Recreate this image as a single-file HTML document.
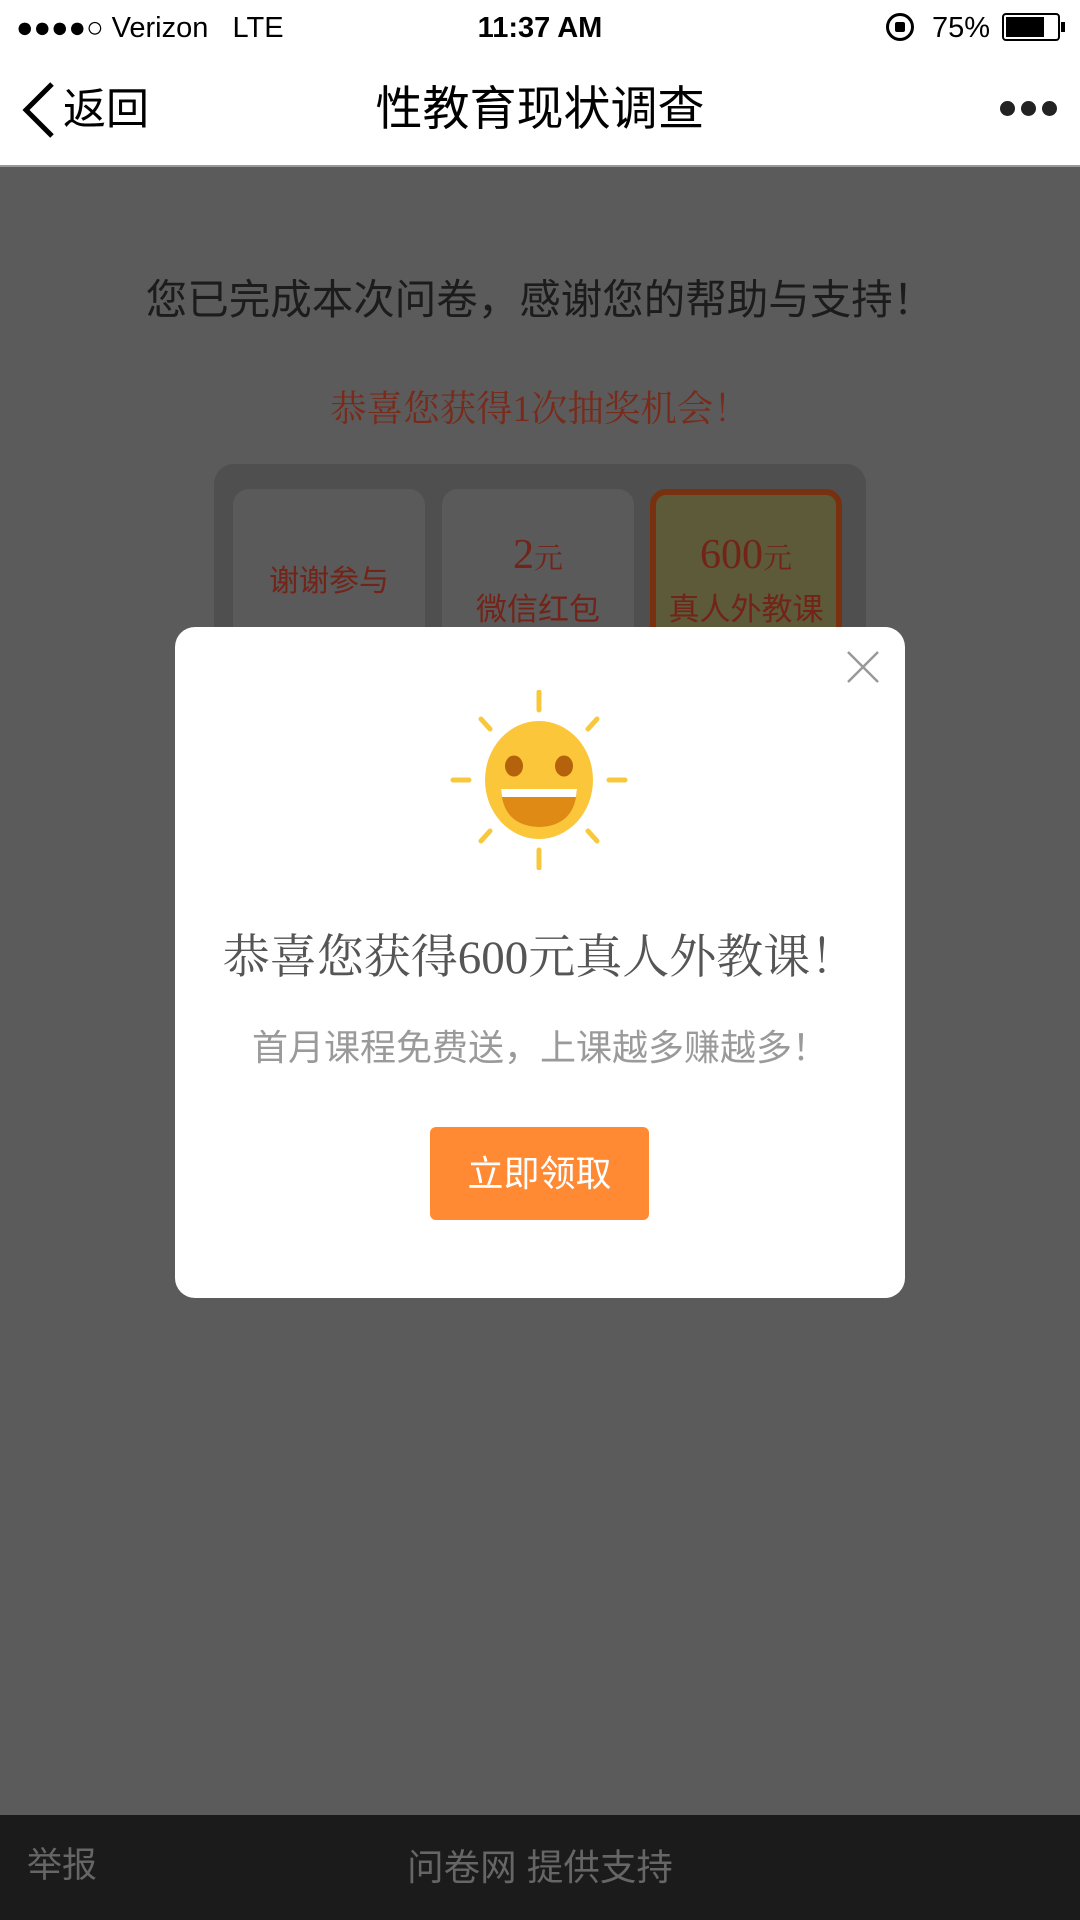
<!DOCTYPE html>
<html><head><meta charset="utf-8"><style>
*{margin:0;padding:0;box-sizing:border-box}
body{width:1080px;height:1920px;position:relative;overflow:hidden;background:#5b5b5b;font-family:"Liberation Sans","Noto Sans CJK SC",sans-serif}
.a{position:absolute}
.serif{font-family:"Liberation Serif","Noto Serif CJK SC",serif}
</style></head><body>
<div class="a" style="left:0;top:0;width:1080px;height:167px;background:#fff;border-bottom:2px solid #999"></div>
<div class="a" style="left:16px;top:8px;font-size:29px;color:#000;line-height:40px">●●●●○ Verizon &nbsp; LTE</div>
<div class="a" style="left:0;width:1080px;top:8px;text-align:center;font-size:29px;font-weight:bold;line-height:40px">11:37 AM</div>
<div class="a" style="left:886px;top:13px;width:28px;height:28px;border:3px solid #000;border-radius:50%"></div>
<div class="a" style="left:895px;top:22px;width:10px;height:10px;background:#000;border-radius:2px"></div>
<div class="a" style="left:932px;top:8px;font-size:29px;line-height:40px">75%</div>
<div class="a" style="left:1002px;top:13px;width:58px;height:28px;border:2px solid #000;border-radius:4px;padding:2px"><div style="width:38px;height:100%;background:#000"></div></div>
<div class="a" style="left:1061px;top:22px;width:4px;height:10px;background:#000"></div>
<svg class="a" style="left:18px;top:80px" width="40" height="60"><path d="M34 4 L8 30 L34 56" stroke="#000" stroke-width="5" fill="none"/></svg>
<div class="a" style="left:63px;top:83px;font-size:43px;line-height:54px">返回</div>
<div class="a" style="left:0;width:1080px;top:80px;text-align:center;font-size:47px;line-height:58px">性教育现状调查</div>
<div class="a" style="left:1000px;top:101px;width:15px;height:15px;border-radius:50%;background:#222;box-shadow:21px 0 0 #222,42px 0 0 #222"></div>

<div class="a" style="left:0;width:1080px;top:274px;text-align:center;font-size:41.5px;color:#1c1c1c;line-height:52px">您已完成本次问卷，感谢您的帮助与支持！</div>
<div class="a serif" style="left:0;width:1080px;top:386px;text-align:center;font-size:36.5px;color:#7a2a1a;line-height:46px">恭喜您获得1次抽奖机会！</div>
<div class="a" style="left:214px;top:464px;width:652px;height:200px;background:#4f4f4f;border-radius:20px"></div>
<div class="a" style="left:233px;top:489px;width:192px;height:200px;background:#5a5a5a;border-radius:16px"></div>
<div class="a" style="left:442px;top:489px;width:192px;height:200px;background:#5a5a5a;border-radius:16px"></div>
<div class="a" style="left:650px;top:489px;width:192px;height:200px;background:#5c5a38;border:6px solid #78300e;border-radius:16px"></div>
<div class="a" style="left:233px;width:192px;top:556px;text-align:center;font-size:30px;color:#722418">谢谢参与</div>
<div class="a serif" style="left:442px;width:192px;top:528px;text-align:center;font-size:42px;color:#722418;line-height:54px">2<span style="font-size:29px">元</span></div>
<div class="a" style="left:442px;width:192px;top:584px;text-align:center;font-size:31px;color:#722418">微信红包</div>
<div class="a serif" style="left:650px;width:192px;top:528px;text-align:center;font-size:42px;color:#722418;line-height:54px">600<span style="font-size:29px">元</span></div>
<div class="a" style="left:650px;width:192px;top:584px;text-align:center;font-size:31px;color:#722418">真人外教课</div>

<div class="a" style="left:175px;top:627px;width:730px;height:671px;background:#fff;border-radius:20px"></div>
<svg class="a" style="left:846px;top:650px" width="34" height="34"><path d="M2 2L32 32M32 2L2 32" stroke="#999" stroke-width="2.5"/></svg>
<svg class="a" style="left:449px;top:690px" width="180" height="180" viewBox="-90 -90 180 180">
<g stroke="#f8c83c" stroke-width="5" stroke-linecap="round">
<path d="M0-88V-70M0 70V88M-86 0H-70M70 0H86M-58-61L-49-51M58-61L49-51M-58 61L-49 51M58 61L49 51"/></g>
<ellipse cx="0" cy="0" rx="54" ry="59" fill="#fbc63a"/>
<ellipse cx="-25" cy="-14" rx="9" ry="10.5" fill="#b5620c"/>
<ellipse cx="25" cy="-14" rx="9" ry="10.5" fill="#b5620c"/>
<path d="M-38 9H38Q36 46 0 47Q-36 46 -38 9Z" fill="#de8a14"/>
<path d="M-38 9H38L37 17H-37Z" fill="#fff"/>
</svg>
<div class="a serif" style="left:175px;width:730px;top:929px;text-align:center;font-size:47px;color:#555;line-height:58px">恭喜您获得600元真人外教课！</div>
<div class="a" style="left:175px;width:730px;top:1025px;text-align:center;font-size:36px;color:#9a9a9a;line-height:46px">首月课程免费送，上课越多赚越多！</div>
<div class="a" style="left:430px;top:1127px;width:219px;height:93px;background:#ff8a33;border-radius:6px;color:#fff;font-size:36px;line-height:93px;text-align:center">立即领取</div>

<div class="a" style="left:0;top:1815px;width:1080px;height:105px;background:#1b1b1b"></div>
<div class="a" style="left:27px;top:1844px;font-size:35px;color:#666;line-height:44px">举报</div>
<div class="a" style="left:0;width:1080px;top:1845px;text-align:center;font-size:36.5px;color:#666;line-height:46px">问卷网 提供支持</div>
</body></html>
